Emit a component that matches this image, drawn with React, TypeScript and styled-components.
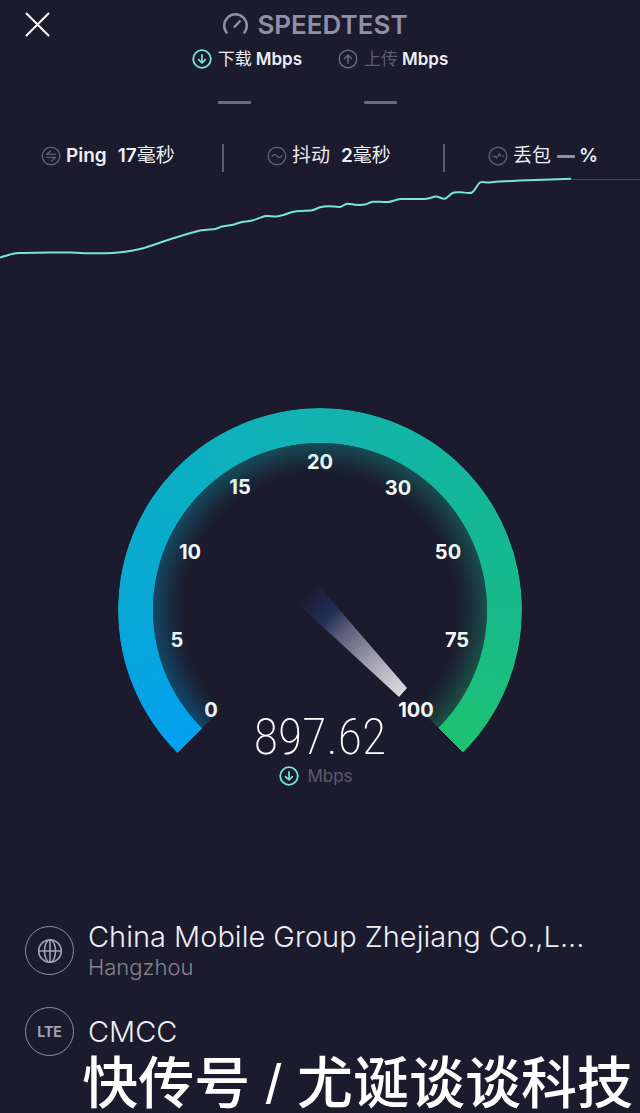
import React from "react";
import styled, { createGlobalStyle, css } from "styled-components";

const colors = {
  page: "#1b1b2d",
  text: "#eeeef6",
  white: "#ffffff",
  logo: "#8f8fa5",
  muted: "#5c5c6f",
  line: "#6b6b7e",
  accent: "#77e5dc",
};

const sans = `Inter, "Noto Sans CJK SC", sans-serif`;

const GlobalStyle = createGlobalStyle`
  *, *::before, *::after { box-sizing: border-box; }
  body { margin: 0; background: ${colors.page}; }
`;

const Page = styled.main`
  display: flex;
  flex-direction: column;
  min-height: 100vh;
  overflow: hidden;
  background: ${colors.page};
  color: ${colors.text};
  font-family: ${sans};
`;

const Header = styled.header`
  display: grid;
  grid-template-columns: 1fr auto 1fr;
  align-items: center;
  height: 49px;
  padding: 0 34px 0 24px;
`;

const CloseButton = styled.button`
  justify-self: start;
  display: flex;
  padding: 0;
  border: 0;
  background: none;
  color: ${colors.white};
  cursor: pointer;
`;

const Logo = styled.h1`
  display: flex;
  align-items: center;
  gap: 8px;
  margin: 0;
  color: ${colors.logo};
  font-size: 26px;
  font-weight: 600;
  line-height: 32px;
`;

const Modes = styled.section`
  display: flex;
  justify-content: center;
  gap: 36px;
`;

const Mode = styled.div<{ $active?: boolean }>`
  display: grid;
  grid-template-columns: 20px auto;
  column-gap: 6px;
  row-gap: 32px;
  align-items: center;
  font-size: 17px;
  line-height: 20px;
  color: ${(p) => (p.$active ? colors.text : colors.muted)};

  svg {
    color: ${(p) => (p.$active ? colors.accent : colors.line)};
  }
`;

const ModeLabel = styled.span`
  white-space: nowrap;
`;

const Unit = styled.b`
  margin-left: 4px;
  color: ${colors.text};
  font-weight: 600;
`;

const Dash = styled.span<{ $inline?: boolean }>`
  height: 3px;
  border-radius: 1px;
  background: ${colors.line};
  ${(p) =>
    p.$inline
      ? css`
          width: 18px;
          margin: 0 4px 0 6px;
          background: ${colors.logo};
        `
      : css`
          grid-column: 2;
          width: 33px;
        `}
`;

const Stats = styled.section`
  display: grid;
  grid-template-columns: 222fr 221fr 197fr;
  margin-top: 40px;
`;

const Stat = styled.div`
  display: flex;
  align-items: center;
  height: 28px;
  padding: 0 0 4px 43px;
  font-size: 19px;
  line-height: 24px;
  white-space: nowrap;

  &:first-child {
    padding-left: 41px;
  }

  & + & {
    border-left: 2px solid ${colors.muted};
  }

  svg {
    margin-right: 5px;
    color: ${colors.muted};
  }

  b {
    font-weight: 600;
  }
`;

const StatValue = styled.span`
  margin-left: 11px;
`;

const History = styled.svg`
  display: block;
  width: 100%;
  height: 92px;
`;

const Gauge = styled.section`
  display: grid;
  align-self: center;
  width: min(404px, 94vw);
  margin-top: 144px;

  & > * {
    grid-area: 1 / 1;
  }
`;

const arcColors = `conic-gradient(
  from 225deg,
  #02a1f0 0deg,
  #08a7d6 45deg,
  #0bafc3 90deg,
  #12b3b0 135deg,
  #13b69c 180deg,
  #18ba8a 225deg,
  #1dc272 270deg,
  transparent 270deg
)`;

const Arc = styled.div<{ $mask: string }>`
  aspect-ratio: 1;
  border-radius: 50%;
  background: ${arcColors};
  mask-image: radial-gradient(closest-side, ${(p) => p.$mask});
`;

const Dial = styled.svg`
  display: block;
  width: 100%;
  aspect-ratio: 1;
  fill: ${colors.white};
  font-size: 20px;
  font-weight: 700;
  text-anchor: middle;
`;

const Reading = styled.div`
  display: flex;
  flex-direction: column;
  align-items: center;
  justify-content: flex-end;
  padding-bottom: 26px;
`;

const Speed = styled.output`
  font-family: "Roboto Condensed", "Liberation Sans Narrow", Roboto, sans-serif;
  font-size: 50px;
  font-weight: 200;
  line-height: 58px;
  color: ${colors.white};
`;

const SpeedUnit = styled.div`
  display: flex;
  align-items: center;
  gap: 8px;
  padding-right: 8px;
  color: ${colors.muted};
  font-size: 17px;
  line-height: 20px;

  svg {
    color: ${colors.accent};
  }
`;

const Connections = styled.section`
  display: grid;
  gap: 32px;
  margin-top: 114px;
  padding: 0 25px;
`;

const Connection = styled.div`
  display: flex;
  align-items: center;
  gap: 14px;
  height: 49px;
`;

const Badge = styled.span`
  flex: none;
  display: flex;
  align-items: center;
  justify-content: center;
  width: 49px;
  height: 49px;
  border: 1px solid ${colors.logo};
  border-radius: 50%;
  color: #a2a2b2;
  font-size: 14px;
  font-weight: 700;
`;

const Name = styled.div`
  font-size: 29px;
  font-weight: 300;
  line-height: 32px;
  white-space: nowrap;
`;

const Place = styled.div`
  color: #85858f;
  font-size: 22px;
  font-weight: 300;
  line-height: 28px;
`;

const Credit = styled.footer`
  padding-right: 7px;
  color: ${colors.white};
  font-family: "Liberation Sans", "Noto Sans CJK SC", sans-serif;
  font-size: 56px;
  font-weight: 500;
  line-height: 56px;
  text-align: right;
  white-space: nowrap;
`;

function RoundIcon({ d, bold }: { d: string; bold?: boolean }) {
  return (
    <svg width="20" height="20" viewBox="0 0 20 20" fill="none" stroke="currentColor" strokeLinecap="round" strokeLinejoin="round" aria-hidden="true">
      <circle cx="10" cy="10" r="8.8" strokeWidth={bold ? 1.8 : 1.5} />
      <path d={d} strokeWidth={bold ? 1.7 : 1.4} />
    </svg>
  );
}

const icons = {
  down: "M10 5.8v8M6.6 10.6l3.4 3.4 3.4-3.4",
  up: "M10 14.2v-8M6.6 9.4L10 6l3.4 3.4",
  ping: "M14.5 8.4H5.6L9.6 5M5.5 11.4h8.9L10.4 15",
  jitter: "M5 10.6c1.5-2.6 3.2-2.6 5-.6s3.5 2 5-.6",
  loss: "M4.8 10.4h2.5l1.2 1.6M9.3 11l2-3.5 1.2 2.5M14.3 10h1",
};

type Point = [number, number];

const samples: Point[] = [
  [0, 85.5], [13, 81.7], [22, 81], [50, 80.5], [70, 80.5], [93, 81.3], [112, 81], [125, 79.7],
  [140, 77], [150, 74], [175, 65.7], [200, 58.5], [215, 57], [222, 54.5], [232, 53], [242, 50],
  [252, 48.5], [266, 44], [278, 44.3], [295, 39.5], [312, 38.3], [320, 35.3], [329, 34.2],
  [340, 35], [347, 31.7], [356, 32.8], [365, 32.5], [373, 29.7], [388, 30], [401, 27], [425, 27],
  [436, 24.6], [445, 26.7], [453, 20.7], [461, 20.3], [472, 20.5], [480, 10.5], [488, 10.5],
  [500, 9.5], [535, 8], [571, 6.8],
];

// Joins the samples with smooth cubic segments.
function smoothPath(points: Point[]) {
  return points.slice(1).reduce((path, [x, y], i) => {
    const [x0, y0] = points[i];
    const before = points[Math.max(i - 1, 0)];
    const after = points[Math.min(i + 2, points.length - 1)];
    const c1 = `${x0 + (x - before[0]) / 7} ${y0 + (y - before[1]) / 7}`;
    const c2 = `${x - (after[0] - x0) / 7} ${y - (after[1] - y0) / 7}`;
    return `${path} C${c1} ${c2} ${x} ${y}`;
  }, `M${points[0].join(" ")}`);
}

const ticks: [string, number, number][] = [
  ["0", 93, 302],
  ["5", 59, 232],
  ["10", 72, 144],
  ["15", 122, 79],
  ["20", 202, 54],
  ["30", 280, 80],
  ["50", 330, 144],
  ["75", 339, 232],
  ["100", 298, 302],
];

export default function App() {
  return (
    <Page>
      <GlobalStyle />
      <Header>
        <CloseButton type="button" aria-label="关闭">
          <svg width="27" height="27" viewBox="0 0 27 27" stroke="currentColor" strokeWidth="2" strokeLinecap="round">
            <path d="M2.5 2.5L24.5 24.5M24.5 2.5L2.5 24.5" />
          </svg>
        </CloseButton>
        <Logo>
          <svg width="27" height="24" viewBox="0 0 27 24" fill="none" stroke="currentColor" strokeWidth="2.5" aria-hidden="true">
            <path d="M5.2 20.3A11.3 11.3 0 1 1 21.8 20.3" />
            <path d="M12 14.3L18.5 7.5" />
          </svg>
          SPEEDTEST
        </Logo>
      </Header>

      <Modes>
        <Mode $active>
          <RoundIcon d={icons.down} bold />
          <ModeLabel>下载<Unit>Mbps</Unit></ModeLabel>
          <Dash />
        </Mode>
        <Mode>
          <RoundIcon d={icons.up} />
          <ModeLabel>上传<Unit>Mbps</Unit></ModeLabel>
          <Dash />
        </Mode>
      </Modes>

      <Stats>
        <Stat>
          <RoundIcon d={icons.ping} />
          <b>Ping</b>
          <StatValue><b>17</b>毫秒</StatValue>
        </Stat>
        <Stat>
          <RoundIcon d={icons.jitter} />
          抖动
          <StatValue><b>2</b>毫秒</StatValue>
        </Stat>
        <Stat>
          <RoundIcon d={icons.loss} />
          丢包
          <Dash $inline />
          <b>%</b>
        </Stat>
      </Stats>

      <History viewBox="0 0 640 92" preserveAspectRatio="none" fill="none" aria-hidden="true">
        <path d="M571 7.5H640" stroke="#454558" />
        <path d={smoothPath(samples)} stroke={colors.accent} strokeWidth="2" strokeLinejoin="round" />
      </History>

      <Gauge>
        <Arc $mask="transparent 82.5%, #000 82.9%" />
        <Arc $mask="transparent 67%, rgba(0,0,0,.07) 72%, rgba(0,0,0,.32) 82.5%, transparent 82.9%" />
        <Dial viewBox="0 0 404 404" aria-hidden="true">
          <defs>
            <linearGradient id="needle" gradientUnits="userSpaceOnUse" x1="188" y1="184" x2="285" y2="285">
              <stop offset="0" stopColor="#1f2c5c" stopOpacity="0" />
              <stop offset="0.22" stopColor="#202c52" />
              <stop offset="0.4" stopColor="#5b5d7b" />
              <stop offset="0.7" stopColor="#a5a4b2" />
              <stop offset="1" stopColor="#dedde0" />
            </linearGradient>
          </defs>
          <path d="M179 195L200 177L289 280L281 289Z" fill="url(#needle)" />
          {ticks.map(([label, x, y]) => (
            <text key={label} x={x} y={y + 7}>{label}</text>
          ))}
        </Dial>
        <Reading>
          <Speed>897.62</Speed>
          <SpeedUnit>
            <RoundIcon d={icons.down} bold />
            Mbps
          </SpeedUnit>
        </Reading>
      </Gauge>

      <Connections>
        <Connection>
          <Badge>
            <svg width="26" height="26" viewBox="0 0 26 26" fill="none" stroke="currentColor" strokeWidth="1.6" aria-hidden="true">
              <circle cx="13" cy="13" r="11.3" />
              <ellipse cx="13" cy="13" rx="5.5" ry="11.3" />
              <path d="M1.7 13H24.3M13 1.7V24.3" />
            </svg>
          </Badge>
          <div>
            <Name>China Mobile Group Zhejiang Co.,L...</Name>
            <Place>Hangzhou</Place>
          </div>
        </Connection>
        <Connection>
          <Badge>LTE</Badge>
          <Name>CMCC</Name>
        </Connection>
      </Connections>

      <Credit>快传号 / 尤诞谈谈科技</Credit>
    </Page>
  );
}
